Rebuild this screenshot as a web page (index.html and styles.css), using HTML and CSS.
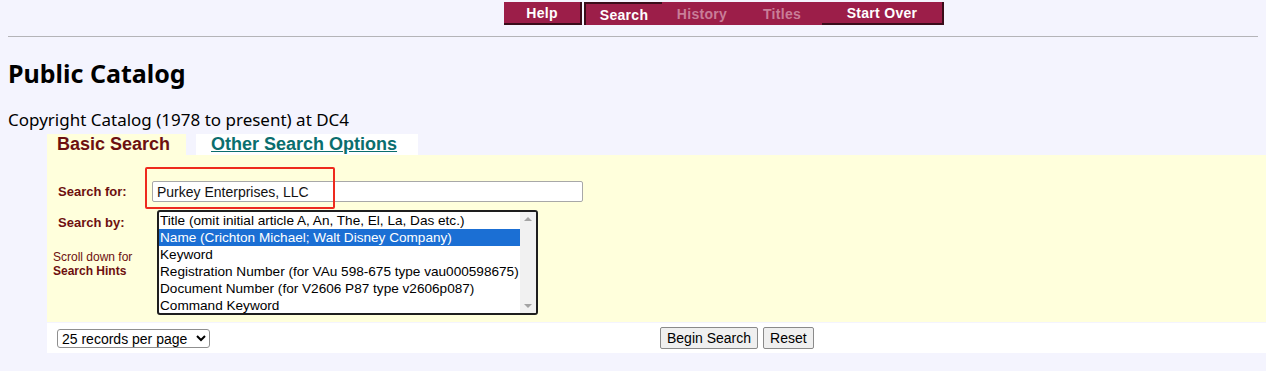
FILE: index.html
```html
<!DOCTYPE html>
<html lang="en">
<head>
    <meta charset="UTF-8">
    <title>Public Catalog</title>
    <link rel="stylesheet" href="styles.css">
</head>
<body>
    <div class="nav">
        <span class="nav-btn">Help</span>
        <span class="nav-btn active">Search</span>
        <span class="nav-btn off">History</span>
        <span class="nav-btn off">Titles</span>
        <span class="nav-btn wide">Start Over</span>
    </div>
    <hr class="rule">

    <h1 class="title">Public Catalog</h1>
    <p class="subtitle">Copyright Catalog (1978 to present) at DC4</p>

    <div class="search-box">
        <div class="tabs">
            <span class="tab current">Basic Search</span>
            <a class="tab other" href="#">Other Search Options</a>
        </div>

        <div class="panel">
            <div class="row row-for">
                <label class="lbl" for="q">Search for:</label>
                <input class="query" type="text" id="q" value="Purkey Enterprises, LLC">
                <span class="mark"></span>
            </div>
            <div class="row row-by">
                <div class="side">
                    <span class="lbl">Search by:</span>
                    <span class="hint">Scroll down for<br><b>Search Hints</b></span>
                </div>
                <div class="listbox">
                    <ul class="opts">
                        <li>Title (omit initial article A, An, The, El, La, Das etc.)</li>
                        <li class="sel">Name (Crichton Michael; Walt Disney Company)</li>
                        <li>Keyword</li>
                        <li>Registration Number (for VAu 598-675 type vau000598675)</li>
                        <li>Document Number (for V2606 P87 type v2606p087)</li>
                        <li>Command Keyword</li>
                    </ul>
                    <div class="scroll">
                        <span class="arrow up"></span>
                        <span class="arrow down"></span>
                    </div>
                </div>
            </div>
        </div>

        <div class="actions">
            <select class="per-page">
                <option>25 records per page</option>
                <option>50 records per page</option>
                <option>100 records per page</option>
            </select>
            <div class="buttons">
                <button type="button">Begin Search</button>
                <button type="button">Reset</button>
            </div>
        </div>
    </div>
</body>
</html>
```

FILE: styles.css
```css
html {
    overflow: hidden;
}
body {
    margin: 0 0 0 8px;
    background: #f4f4fe;
    font-family: "Liberation Sans", Arial, sans-serif;
    color: #000;
}
.nav {
    display: flex;
    margin: 2px 0 0 496px;
    height: 23px;
}
.nav-btn {
    display: flex;
    align-items: center;
    justify-content: center;
    width: 78px;
    background: #9c1e49;
    color: #fff;
    font-weight: bold;
    font-size: 14px;
    letter-spacing: 0.3px;
    border-right: 2px solid #3a0c1a;
    border-bottom: 2px solid #3a0c1a;
    box-sizing: border-box;
}
.nav-btn + .nav-btn {
    margin-left: 2px;
}
.nav-btn.active {
    border: none;
    border-top: 2px solid #3a0c1a;
    border-left: 2px solid #3a0c1a;
    width: 78px;
}
.nav-btn.off {
    color: #c97d98;
    border: none;
    margin-left: 0;
    width: 80px;
}
.nav-btn.wide {
    width: 122px;
    margin-left: 0;
}
.rule {
    margin: 11px 8px 0 0;
    border: none;
    border-top: 1px solid #b4b4b8;
}
.title {
    font-family: "Noto Sans", "Open Sans", sans-serif;
    font-size: 25px;
    font-weight: bold;
    margin: 19px 0 0;
    line-height: 34px;
}
.subtitle {
    font-family: "Noto Sans", "Open Sans", sans-serif;
    font-size: 17px;
    margin: 18px 0 2px;
    line-height: 24px;
}
.search-box {
    margin: 0 -10px 0 39px;
}
.tabs {
    display: flex;
    height: 21px;
}
.tab {
    font-size: 18px;
    font-weight: bold;
    line-height: 21px;
}
.tab.current {
    background: #ffffdc;
    color: #6d1010;
    width: 139px;
    padding-left: 10px;
    box-sizing: border-box;
}
.tab.other {
    background: #fff;
    color: #0a6e6e;
    margin-left: 10px;
    width: 222px;
    padding-left: 15px;
    box-sizing: border-box;
}
.panel {
    background: #ffffdc;
    height: 167px;
    padding-top: 26px;
    box-sizing: border-box;
}
.row {
    display: flex;
}
.lbl {
    color: #6d1010;
    font-weight: bold;
    font-size: 13px;
}
.row-for {
    position: relative;
    align-items: center;
    padding-left: 11px;
}
.row-for .lbl {
    width: 94px;
}
.query {
    width: 431px;
    height: 21px;
    box-sizing: border-box;
    border: 1px solid #a8a8a8;
    border-radius: 2px;
    padding: 0 4px;
    font-family: "Liberation Sans", Arial, sans-serif;
    font-size: 14px;
    color: #111;
    background: #fff;
}
.mark {
    position: absolute;
    left: 98px;
    top: -14px;
    width: 190px;
    height: 42px;
    border: 2px solid #ee2a1e;
    border-radius: 2px;
    box-sizing: border-box;
}
.row-by {
    margin-top: 8px;
}
.side {
    width: 110px;
    padding-left: 6px;
    box-sizing: border-box;
}
.side .lbl {
    display: block;
    padding: 5px 0 0 5px;
}
.hint {
    display: block;
    margin-top: 20px;
    font-size: 12px;
    line-height: 14px;
    color: #6d1010;
}
.listbox {
    display: flex;
    width: 381px;
    height: 105px;
    border: 2px solid #1e1e1e;
    border-radius: 3px;
    box-sizing: border-box;
    background: #fff;
    overflow: hidden;
}
.opts {
    list-style: none;
    margin: 0;
    padding: 0;
    flex: 1;
    min-width: 0;
    font-size: 13.6px;
    line-height: 17px;
}
.opts li {
    padding-left: 1px;
    white-space: nowrap;
}
.opts li.sel {
    background: #1b6fd4;
    color: #fff;
}
.scroll {
    flex-shrink: 0;
    width: 16px;
    background: #f1f1f1;
    position: relative;
}
.arrow {
    position: absolute;
    left: 4px;
    width: 0;
    height: 0;
    border-left: 4px solid transparent;
    border-right: 4px solid transparent;
}
.arrow.up {
    top: 5px;
    border-bottom: 4px solid #a3a3a3;
}
.arrow.down {
    bottom: 5px;
    border-top: 4px solid #a3a3a3;
}
.actions {
    display: grid;
    grid-template-columns: 603px auto;
    align-items: center;
    background: #fff;
    height: 30px;
    margin-top: 1px;
    padding-left: 10px;
}
.per-page {
    width: 153px;
    height: 19px;
    font-family: "Liberation Sans", Arial, sans-serif;
    font-size: 14px;
    padding: 0;
    border: 1px solid #8f8f8f;
    border-radius: 3px;
    background: #fff;
}
.buttons {
    display: flex;
    gap: 5px;
}
.buttons button {
    height: 22px;
    padding: 0 6px;
    font-family: "Liberation Sans", Arial, sans-serif;
    font-size: 14px;
    background: #efefef;
    border: 1px solid #8a8a8a;
    border-radius: 2px;
    color: #000;
}
```
